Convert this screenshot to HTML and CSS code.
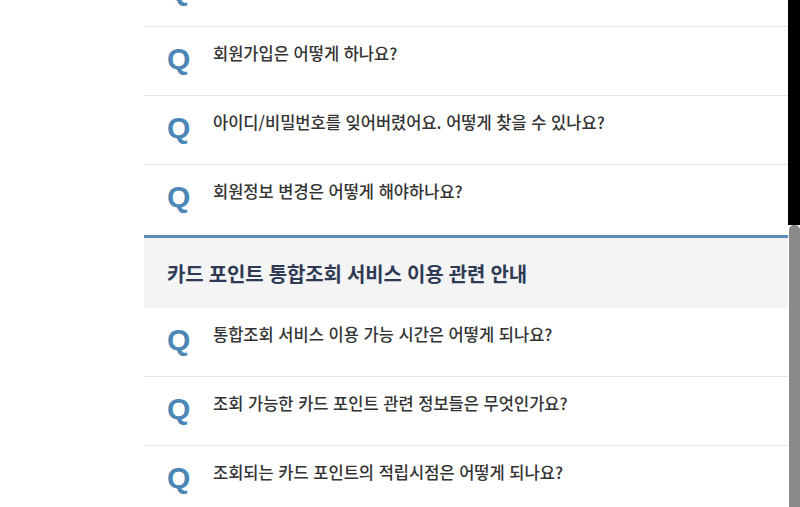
FILE: index.html
```html
<!DOCTYPE html>
<html lang="ko">
<head>
<meta charset="utf-8">
<title>FAQ</title>
<link rel="stylesheet" href="styles.css">
</head>
<body>
<div class="screen">
  <main class="page">
    <div class="faq">
      <ul class="faq-list">
        <li class="faq-item"><span class="q">Q</span><span class="question">로그인은 어떻게 하나요?</span></li>
        <li class="faq-item"><span class="q">Q</span><span class="question">회원가입은 어떻게 하나요?</span></li>
        <li class="faq-item"><span class="q">Q</span><span class="question">아이디/비밀번호를 잊어버렸어요. 어떻게 찾을 수 있나요?</span></li>
        <li class="faq-item faq-item--last"><span class="q">Q</span><span class="question">회원정보 변경은 어떻게 해야하나요?</span></li>
      </ul>
      <section class="faq-section">
        <h2 class="section-title">카드 포인트 통합조회 서비스 이용 관련 안내</h2>
        <ul class="faq-list">
          <li class="faq-item"><span class="q">Q</span><span class="question">통합조회 서비스 이용 가능 시간은 어떻게 되나요?</span></li>
          <li class="faq-item"><span class="q">Q</span><span class="question">조회 가능한 카드 포인트 관련 정보들은 무엇인가요?</span></li>
          <li class="faq-item"><span class="q">Q</span><span class="question">조회되는 카드 포인트의 적립시점은 어떻게 되나요?</span></li>
        </ul>
      </section>
    </div>
  </main>
  <div class="scrollbar">
    <div class="scrollbar-top"></div>
    <div class="scrollbar-thumb"></div>
  </div>
</div>
</body>
</html>
```

FILE: styles.css
```css
html, body {
  margin: 0;
  padding: 0;
  background: #ffffff;
}

body {
  font-family: "Noto Sans CJK KR", "Noto Sans", sans-serif;
  color: #333333;
}

.screen {
  display: flex;
  width: 800px;
  height: 507px;
  overflow: hidden;
}

.page {
  flex: 1;
  padding-left: 144px;
  overflow: hidden;
}

.faq {
  margin-top: -42px;
}

.faq-list {
  list-style: none;
  margin: 0;
  padding: 0;
}

.faq-item {
  display: flex;
  align-items: flex-start;
  box-sizing: content-box;
  padding: 15px 0 0 23px;
  height: 53px;
  border-bottom: 1px solid #e4e4e4;
}

.faq-item--last {
  border-bottom: none;
  height: 55px;
}

.q {
  width: 46px;
  flex: none;
  margin-top: 2px;
  font-family: "Liberation Sans", Arial, sans-serif;
  font-weight: 700;
  font-size: 30px;
  line-height: 30px;
  color: #4a86b6;
}

.question {
  font-size: 16.5px;
  font-weight: 500;
  line-height: 22px;
  letter-spacing: 0;
  color: #333333;
}

.faq-section {
  border-top: 3px solid #5a8cb8;
}

.section-title {
  display: flex;
  align-items: center;
  height: 70px;
  margin: 0;
  padding-left: 23px;
  background: #f4f4f4;
  font-size: 20px;
  font-weight: 700;
  letter-spacing: -0.2px;
  color: #2f3a55;
}

.scrollbar {
  width: 12px;
  flex: none;
  display: flex;
  flex-direction: column;
}

.scrollbar-top {
  height: 225px;
  background: #000000;
}

.scrollbar-thumb {
  flex: 1;
  margin-left: 1px;
  background: #8a8a8a;
  border-radius: 5px 5px 0 0;
}
```
